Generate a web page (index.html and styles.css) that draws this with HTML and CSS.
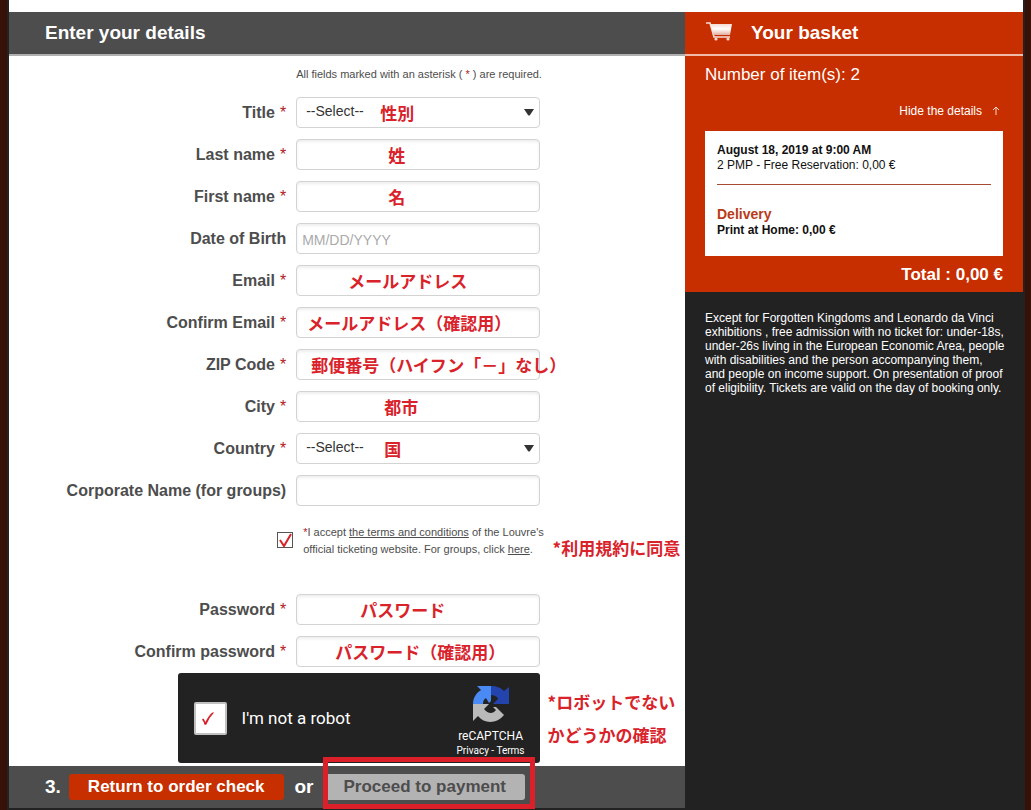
FILE: index.html
```html
<!DOCTYPE html>
<html lang="en">
<head>
<meta charset="utf-8">
<title>Enter your details</title>
<link rel="stylesheet" href="styles.css">
</head>
<body>
<div class="page">
  <main class="main">
    <h1 class="bar">Enter your details</h1>
    <form class="form" id="details">
      <p class="hint">All fields marked with an asterisk ( <span class="req">*</span> ) are required.</p>

      <div class="rows">
        <label class="label" for="title">Title <span class="req">*</span></label>
        <div class="field">
          <select class="control select" id="title"><option>--Select--</option></select>
          <svg class="arrow" viewBox="0 0 10 7" aria-hidden="true"><path d="M0 0h10L6 6q-1 1-2 0z"/></svg>
          <span class="note note-title" lang="ja">性別</span>
        </div>
        <label class="label" for="last">Last name <span class="req">*</span></label>
        <div class="field"><input class="control" id="last" type="text"><span class="note note-name" lang="ja">姓</span></div>
        <label class="label" for="first">First name <span class="req">*</span></label>
        <div class="field"><input class="control" id="first" type="text"><span class="note note-name" lang="ja">名</span></div>
        <label class="label" for="birth">Date of Birth</label>
        <div class="field"><input class="control" id="birth" type="text" placeholder="MM/DD/YYYY"></div>
        <label class="label" for="email">Email <span class="req">*</span></label>
        <div class="field"><input class="control" id="email" type="email"><span class="note note-email" lang="ja">メールアドレス</span></div>
        <label class="label" for="email2">Confirm Email <span class="req">*</span></label>
        <div class="field"><input class="control" id="email2" type="email"><span class="note note-email2" lang="ja">メールアドレス（確認用）</span></div>
        <label class="label" for="zip">ZIP Code <span class="req">*</span></label>
        <div class="field"><input class="control" id="zip" type="text"><span class="note note-zip" lang="ja">郵便番号（ハイフン「－」なし）</span></div>
        <label class="label" for="city">City <span class="req">*</span></label>
        <div class="field"><input class="control" id="city" type="text"><span class="note note-city" lang="ja">都市</span></div>
        <label class="label" for="country">Country <span class="req">*</span></label>
        <div class="field">
          <select class="control select" id="country"><option>--Select--</option></select>
          <svg class="arrow" viewBox="0 0 10 7" aria-hidden="true"><path d="M0 0h10L6 6q-1 1-2 0z"/></svg>
          <span class="note note-city" lang="ja">国</span>
        </div>
        <label class="label" for="corp">Corporate Name (for groups)</label>
        <div class="field"><input class="control" id="corp" type="text"></div>
      </div>

      <div class="rows terms">
        <div class="tick-cell"><input class="tick" id="accept" type="checkbox" checked><svg class="check" viewBox="0 0 16 16" aria-hidden="true"><path d="M3 8l4 6 7-12"/></svg></div>
        <label class="terms-text" for="accept"><span class="req">*</span>I accept <a href="#terms">the terms and conditions</a> of the Louvre's<br>official ticketing website. For groups, click <a href="#groups">here</a>.<span class="note note-terms" lang="ja">*利用規約に同意</span></label>
      </div>

      <div class="rows">
        <label class="label" for="pass">Password <span class="req">*</span></label>
        <div class="field"><input class="control" id="pass" type="password"><span class="note note-pass" lang="ja">パスワード</span></div>
        <label class="label" for="pass2">Confirm password <span class="req">*</span></label>
        <div class="field"><input class="control" id="pass2" type="password"><span class="note note-pass2" lang="ja">パスワード（確認用）</span></div>
      </div>

      <div class="rows captcha-row">
        <div class="captcha">
          <div class="robot-cell"><input class="robot-box" id="robot" type="checkbox" checked><svg class="robot-check" viewBox="0 0 16 16" aria-hidden="true"><path d="M1 9l2-1 2 4q4-8 8-11l2 0Q9 7 6 15H4Q3 11 1 9z"/></svg></div>
          <label class="robot-label" for="robot">I'm not a robot</label>
          <div class="brand">
            <svg class="brand-logo" viewBox="0 0 36 36" aria-hidden="true">
              <path fill="#2444ad" d="M18 0c6 0 10 2 13 5l5-4v17H20l5-5c-1-3-4-4-7-4z"/>
              <path fill="#4a8af4" d="M18 0H4l4 4C3 7 0 12 0 18h10c0-3 1-5 3-6l3 5 2-2z"/>
              <path fill="#bababa" d="M0 18h16l-5 5c4 5 9 5 12 1l-3-3h3l8 8C24 38 11 38 5 30l-5 5z"/>
            </svg>
            <span class="brand-name">reCAPTCHA</span>
            <span class="brand-links"><a href="#privacy">Privacy</a> - <a href="#use">Terms</a></span>
          </div>
          <span class="note note-robot" lang="ja">*ロボットでない<br>かどうかの確認</span>
        </div>
      </div>
    </form>
    <div class="actions">
      <span>3.</span>
      <button class="btn back" type="button">Return to order check</button>
      <span class="or">or</span>
      <button class="btn pay" type="submit" form="details">Proceed to payment</button>
    </div>
  </main>

  <aside class="side">
    <h2 class="bar basket-bar">
      <svg class="cart" viewBox="0 0 26 19" aria-hidden="true">
        <defs><linearGradient id="metal" x1="0" y1="0" x2="0" y2="1"><stop offset="0" stop-color="#f4dcd5"/><stop offset=".45" stop-color="#fff"/><stop offset="1" stop-color="#e3ad9d"/></linearGradient></defs>
        <path fill="none" stroke="#f7ded7" stroke-width="1.6" d="M0 1h4l4 14h16"/>
        <path fill="url(#metal)" d="M4 2h22l-2 11H8z"/>
        <circle cx="10" cy="17" r="1.6" fill="#f7d5cc"/><circle cx="22" cy="17" r="1.6" fill="#f7d5cc"/>
      </svg>
      Your basket
    </h2>
    <section class="basket">
      <p class="count">Number of item(s): 2</p>
      <button class="toggle" type="button">Hide the details
        <svg class="up" viewBox="0 0 8 9" aria-hidden="true"><path d="M4 9V1M1 4l3-3 3 3"/></svg>
      </button>
      <div class="card">
        <p class="strong">August 18, 2019 at 9:00 AM</p>
        <p>2 PMP - Free Reservation: 0,00 €</p>
        <hr class="rule">
        <h3 class="delivery">Delivery</h3>
        <p class="strong">Print at Home: 0,00 €</p>
      </div>
      <p class="total">Total : 0,00 €</p>
    </section>
    <p class="info">Except for Forgotten Kingdoms and Leonardo da Vinci exhibitions , free admission with no ticket for: under-18s, under-26s living in the European Economic Area, people with disabilities and the person accompanying them,<br>and people on income support. On presentation of proof<br>of eligibility. Tickets are valid on the day of booking only.</p>
  </aside>
</div>
</body>
</html>
```
FILE: styles.css
```css
* { box-sizing: border-box; }

body {
  margin: 0;
  padding: 0 6px 0 7px;
  background: #351107;
  color: #4d4d4d;
  font-family: "Liberation Sans", Arial, sans-serif;
}

h1, h2, h3, p { margin: 0; }

.page {
  display: grid;
  grid-template-columns: 2fr 1fr;
  min-height: 100vh;
  border: solid #222;
  border-width: 0 2px 2px;
  background: #222;
}

.main {
  padding-top: 12px;
  background: #fff;
  display: flex;
  flex-direction: column;
}

.bar {
  height: 44px;
  padding-left: 36px;
  border-bottom: 2px solid #b0b0b0;
  background: #4d4d4d;
  color: #fff;
  font-size: 19px;
  line-height: 42px;
}

.form { padding-top: 10px; }

.hint {
  margin: 0 0 15px;
  padding-left: calc(41% + 10px);
  font-size: 11px;
  line-height: 16px;
}

.req { color: #b32020; font-weight: normal; }

.rows {
  display: grid;
  grid-template-columns: 41% 36%;
  gap: 11px 10px;
}

.label {
  display: flex;
  justify-content: flex-end;
  gap: 5px;
  font-size: 16px;
  font-weight: bold;
  line-height: 31px;
}

.field { position: relative; }

.control {
  display: block;
  width: 100%;
  height: 31px;
  padding: 2px 5px 0;
  border: 1px solid #d3d3d3;
  border-radius: 4px;
  background: #fff;
  box-shadow: inset 0 2px 3px #eee;
  color: #333;
  font: 14px "Liberation Sans", Arial, sans-serif;
}

.control::placeholder { color: #aaa; }

.select {
  appearance: none;
  padding: 0 9px 3px;
  box-shadow: none;
}

.arrow {
  position: absolute;
  top: 12px;
  right: 6px;
  width: 10px;
  height: 7px;
  fill: #333;
  pointer-events: none;
}

/* Red hints laid over the form */
.note {
  position: absolute;
  top: 0;
  color: #d9222a;
  font-family: "Noto Sans CJK JP", sans-serif;
  font-size: 17px;
  font-weight: bold;
  line-height: 31px;
  white-space: nowrap;
  pointer-events: none;
}

.note-title { left: 84px; }
.note-name { left: 92px; }
.note-email { left: 52px; }
.note-email2 { left: 11px; }
.note-zip { left: 15px; }
.note-city { left: 88px; }
.note-pass { left: 64px; }
.note-pass2 { left: 39px; }
.note-terms { top: 8px; left: calc(100% + 13px); }
.note-robot { top: 12px; left: calc(100% + 8px); line-height: 33px; }

.terms { margin: 18px 0 36px; }

.tick-cell {
  position: relative;
  justify-self: end;
  width: 16px;
  height: 16px;
  margin: 8px -7px 0 0;
}

.tick {
  display: block;
  width: 16px;
  height: 16px;
  margin: 0;
  appearance: none;
  border: 1px solid #555;
  background: #fff;
}

.check {
  position: absolute;
  inset: 0;
  fill: none;
  stroke: #d9222a;
  stroke-width: 2;
  pointer-events: none;
}

.terms-text {
  position: relative;
  padding-left: 7px;
  font-size: 11px;
  line-height: 17px;
  white-space: nowrap;
}

.terms-text a { color: inherit; }

.captcha-row { margin-top: 6px; }

.captcha {
  position: relative;
  grid-column: 1 / -1;
  justify-self: end;
  display: flex;
  align-items: center;
  gap: 15px;
  width: 362px;
  height: 90px;
  padding: 0 15px 0 16px;
  border-radius: 3px;
  background: #222;
  color: #fff;
  font-family: Roboto, sans-serif;
}

.robot-cell {
  position: relative;
  width: 33px;
  height: 33px;
}

.robot-box {
  display: block;
  width: 33px;
  height: 33px;
  margin: 0;
  appearance: none;
  border: 2px solid #c1c1c1;
  border-radius: 2px;
  background: #fff;
}

.robot-check {
  position: absolute;
  top: 9px;
  left: 7px;
  width: 14px;
  height: 15px;
  fill: #d9222a;
  pointer-events: none;
}

.robot-label { font-size: 17px; }

.brand {
  display: flex;
  flex-direction: column;
  align-items: center;
  margin-left: auto;
  padding-top: 8px;
}

.brand-logo { width: 36px; height: 36px; }

.brand-name {
  margin-top: 6px;
  font-size: 12px;
  line-height: 16px;
}

.brand-links { font-size: 10px; line-height: 14px; }
.brand-links a { color: inherit; text-decoration: none; }

.actions {
  display: flex;
  align-items: center;
  flex: 1;
  gap: 8px;
  margin-top: 3px;
  padding-left: 36px;
  background: #4d4d4d;
  color: #fff;
  font-size: 19px;
  font-weight: bold;
  line-height: 42px;
}

.or { padding: 0 3px; }

.btn {
  position: relative;
  height: 26px;
  padding: 0 19px;
  border: 0;
  border-radius: 3px;
  background: #c72e00;
  color: #fff;
  font: bold 17px "Liberation Sans", Arial, sans-serif;
}

.pay {
  background: #b3b3b3;
  color: #4d4d4d;
}

.pay::after {
  content: "";
  position: absolute;
  inset: -17px -10px -9px -2px;
  border: 5px solid #dc2029;
}

.side {
  padding-top: 12px;
  background: linear-gradient(#fff 12px, #222 12px);
  color: #fff;
}

.basket-bar {
  display: flex;
  gap: 19px;
  padding-left: 21px;
  border-color: #f0b9a8;
  background: #c72e00;
}

.cart { width: 26px; height: 19px; margin-top: 10px; }

.basket {
  display: flex;
  flex-direction: column;
  padding: 9px 20px 7px;
  background: #c72e00;
}

.count { font-size: 17px; line-height: 20px; }

.toggle {
  display: flex;
  align-items: center;
  align-self: flex-end;
  gap: 10px;
  margin: 18px 3px 12px 0;
  padding: 0;
  border: 0;
  background: none;
  color: #fff;
  font: 12px/16px "Liberation Sans", Arial, sans-serif;
}

.up {
  width: 8px;
  height: 9px;
  margin-bottom: 2px;
  fill: none;
  stroke: #f9d5cb;
}

.card {
  padding: 12px 12px 18px;
  background: #fff;
  color: #111;
  font-size: 12px;
  line-height: 15px;
}

.strong { font-weight: bold; }

.rule {
  margin: 11px 0 20px;
  border: 0;
  border-top: 1px solid #a84a30;
}

.delivery {
  color: #b93a18;
  font-size: 14px;
  line-height: 18px;
}

.total {
  margin-top: 8px;
  font-size: 17px;
  font-weight: bold;
  line-height: 21px;
  text-align: right;
}

.info {
  padding: 19px 12px 18px 20px;
  font-size: 12px;
  line-height: 14px;
}
```
